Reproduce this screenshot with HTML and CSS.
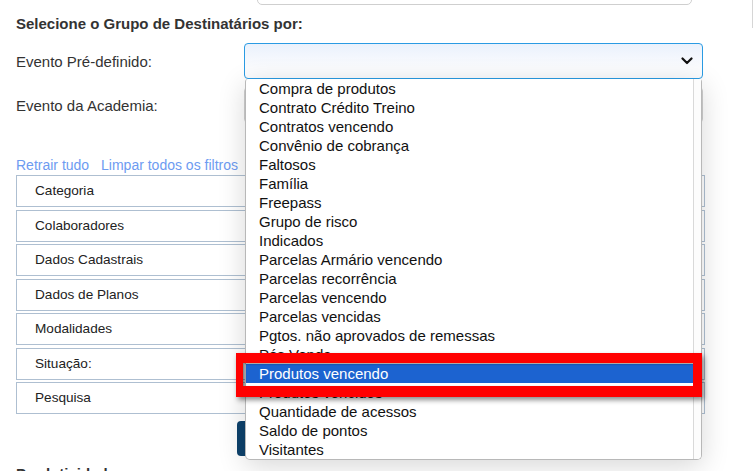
FILE: index.html
```html
<!DOCTYPE html>
<html lang="pt-BR">
<head>
    <meta charset="UTF-8">
    <title>Mala direta</title>
    <link rel="stylesheet" href="styles.css">
</head>
<body>

<div class="page">
    <div class="top-row">
        <div class="top-input"></div>
        <div class="edge-line"></div>
    </div>

    <h3 class="section-title">Selecione o Grupo de Destinatários por:</h3>

    <div class="form-row">
        <label class="form-label">Evento Pré-definido:</label>
        <div class="select-wrap">
            <div class="select focused">
                <svg class="chevron" width="12" height="8" viewBox="0 0 12 8">
                    <polyline points="1.5,1.5 6,6 10.5,1.5" fill="none" stroke="#111" stroke-width="2.2" stroke-linecap="round" stroke-linejoin="round"/>
                </svg>
            </div>

            <!-- lista aberta do select -->
            <div class="dropdown">
                <ul class="options">
                    <li>Compra de produtos</li>
                    <li>Contrato Crédito Treino</li>
                    <li>Contratos vencendo</li>
                    <li>Convênio de cobrança</li>
                    <li>Faltosos</li>
                    <li>Família</li>
                    <li>Freepass</li>
                    <li>Grupo de risco</li>
                    <li>Indicados</li>
                    <li>Parcelas Armário vencendo</li>
                    <li>Parcelas recorrência</li>
                    <li>Parcelas vencendo</li>
                    <li>Parcelas vencidas</li>
                    <li>Pgtos. não aprovados de remessas</li>
                    <li>Pós Venda</li>
                    <li class="selected">Produtos vencendo</li>
                    <li>Produtos vencidos</li>
                    <li>Quantidade de acessos</li>
                    <li>Saldo de pontos</li>
                    <li>Visitantes</li>
                </ul>
                <div class="scroll-track"></div>
                <div class="highlight"></div>
            </div>
        </div>
    </div>

    <div class="form-row second">
        <label class="form-label">Evento da Academia:</label>
        <div class="select-wrap">
            <div class="select"></div>
        </div>
    </div>

    <div class="filter-links">
        <a href="#">Retrair tudo</a>
        <a href="#">Limpar todos os filtros</a>
    </div>

    <div class="panels">
        <div class="panel">Categoria</div>
        <div class="panel">Colaboradores</div>
        <div class="panel">Dados Cadastrais</div>
        <div class="panel">Dados de Planos</div>
        <div class="panel">Modalidades</div>
        <div class="panel">Situação:</div>
        <div class="panel">Pesquisa</div>
    </div>

    <button class="btn-primary"></button>

    <h3 class="section-title bottom">Produtividade:</h3>
</div>

</body>
</html>
```

FILE: styles.css
```css
body {
    margin: 0;
    font-family: "Liberation Sans", Arial, sans-serif;
    background-color: #ffffff;
    color: #333;
    height: 471px;
    overflow: hidden;
}

.page {
    padding: 0 16px;
}

.top-row {
    display: flex;
    margin-top: -25px;
    height: 30px;
}

.top-input {
    flex-shrink: 0;
    margin-left: 241px;
    width: 435px;
    height: 30px;
    border: 1px solid #cfcfcf;
    border-radius: 5px;
    box-sizing: border-box;
}

.edge-line {
    margin-left: 60px;
    width: 1px;
    height: 53px;
    flex-shrink: 0;
    background-color: #d6d6d6;
}

.section-title {
    font-size: 15px;
    font-weight: bold;
    line-height: 18px;
    margin: 10px 0 0 0;
    color: #333;
}

.section-title.bottom {
    margin-top: 9px;
}

.form-row {
    display: flex;
    align-items: center;
    margin-top: 10px;
}

.form-row.second {
    margin-top: 8px;
}

.form-label {
    width: 228px;
    font-size: 15px;
    color: #333;
}

.select-wrap {
    position: relative;
    width: 459px;
    height: 36px;
}

.select {
    height: 36px;
    border: 1px solid #cfcfcf;
    border-radius: 4px;
    box-sizing: border-box;
    background-color: #fff;
}

.select.focused {
    border-color: #2a9be3;
    background: linear-gradient(#eaf1fc, #fbfcfe 70%);
    display: flex;
    align-items: center;
    justify-content: flex-end;
    padding-right: 9px;
}

.dropdown {
    position: absolute;
    top: 36px;
    left: 1px;
    width: 457px;
    display: flex;
    background-color: #fff;
    border: 1px solid #b8b8b8;
    border-top: none;
    border-radius: 3px 3px 5px 5px;
    box-sizing: border-box;
    box-shadow: 0 6px 28px rgba(0, 0, 0, 0.16);
    z-index: 10;
}

.options {
    flex: 1;
    list-style: none;
    margin: 0;
    padding: 0;
}

.options li {
    font-size: 15px;
    line-height: 19px;
    height: 19px;
    padding-left: 13px;
    color: #111;
    white-space: nowrap;
}

.options li.selected {
    background-color: #1c63d0;
    color: #fff;
}

.scroll-track {
    width: 7px;
    border-left: 1px solid #d9d9d9;
    background-color: #fcfcfc;
    border-radius: 0 0 4px 0;
}

/* cadre rouge d'annotation */
.highlight {
    position: absolute;
    top: 274px;
    left: -10px;
    width: 466px;
    height: 44px;
    border-style: solid;
    border-color: #ff0000;
    border-width: 10px 9px 11px 7px;
    box-sizing: border-box;
    box-shadow: 2px 3px 5px rgba(0, 0, 0, 0.45), inset 2px 1px 2px rgba(0, 0, 0, 0.45);
}

.filter-links {
    margin-top: 34px;
    font-size: 14px;
    line-height: 16px;
}

.filter-links a {
    color: #6d9bf1;
    text-decoration: none;
    margin-right: 8px;
}

.panels {
    margin-top: 2px;
}

.panel {
    width: 689px;
    height: 32px;
    margin-bottom: 2.5px;
    border: 1px solid #aebfd1;
    box-sizing: border-box;
    padding-left: 18px;
    font-size: 13.6px;
    line-height: 30px;
    color: #222;
}

.btn-primary {
    display: block;
    margin: 6.5px 0 0 221px;
    width: 110px;
    height: 35px;
    background-color: #0d426c;
    border: none;
    border-radius: 4px;
}
```
